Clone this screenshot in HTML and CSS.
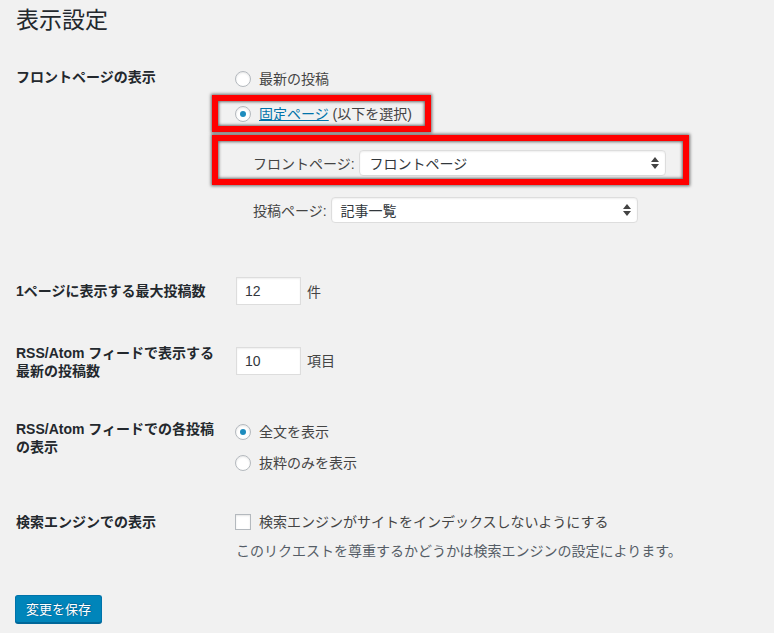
FILE: index.html
```html
<!DOCTYPE html>
<html lang="ja">
<head>
<meta charset="utf-8">
<link rel="stylesheet" href="styles.css">
</head>
<body>
<div class="wrap">
  <h1 class="title">表示設定</h1>

  <div class="row row-front">
    <div class="th">フロントページの表示</div>
    <div class="td">
      <label class="opt"><span class="radio"></span>最新の投稿</label>
      <label class="opt opt-2"><span class="radio checked"></span><a href="#" class="link">固定ページ</a>&nbsp;(以下を選択)</label>
      <div class="sel-row sel-row-1">
        <span class="sel-label">フロントページ:</span>
        <div class="select sel-front"><span>フロントページ</span>
          <svg class="arrows" width="8" height="12" viewBox="0 0 8 12"><path d="M4 0 L8 5 L0 5 Z M0 7 L8 7 L4 12 Z" fill="#444"/></svg>
        </div>
      </div>
      <div class="sel-row sel-row-2">
        <span class="sel-label">投稿ページ:</span>
        <div class="select sel-posts"><span>記事一覧</span>
          <svg class="arrows" width="8" height="12" viewBox="0 0 8 12"><path d="M4 0 L8 5 L0 5 Z M0 7 L8 7 L4 12 Z" fill="#444"/></svg>
        </div>
      </div>
    </div>
  </div>

  <div class="row row-per-page">
    <div class="th th-single">1ページに表示する最大投稿数</div>
    <div class="td td-inline">
      <span class="num-input">12</span><span class="unit">件</span>
    </div>
  </div>

  <div class="row row-rss">
    <div class="th th-double">RSS/Atom フィードで表示する<br>最新の投稿数</div>
    <div class="td td-inline td-rss">
      <span class="num-input">10</span><span class="unit">項目</span>
    </div>
  </div>

  <div class="row row-rss-use">
    <div class="th th-double">RSS/Atom フィードでの各投稿<br>の表示</div>
    <div class="td td-rss-use">
      <label class="opt"><span class="radio checked"></span>全文を表示</label>
      <label class="opt opt-b"><span class="radio"></span>抜粋のみを表示</label>
    </div>
  </div>

  <div class="row row-search">
    <div class="th">検索エンジンでの表示</div>
    <div class="td">
      <label class="opt"><span class="checkbox"></span>検索エンジンがサイトをインデックスしないようにする</label>
      <p class="description">このリクエストを尊重するかどうかは検索エンジンの設定によります。</p>
    </div>
  </div>

  <button class="button-primary">変更を保存</button>

  <div class="annot annot-1"></div>
  <div class="annot annot-2"></div>
</div>
</body>
</html>
```

FILE: styles.css
```css
html, body {
  margin: 0;
  padding: 0;
  background: #f1f1f1;
}
body {
  font-family: "Liberation Sans", "Noto Sans CJK JP", sans-serif;
  font-size: 14px;
  color: #444;
  width: 774px;
  height: 633px;
  overflow: hidden;
}
.wrap {
  position: relative;
  padding-left: 16px;
}
.title {
  margin: 0;
  padding-top: 6px;
  font-size: 23px;
  line-height: 29px;
  font-weight: 400;
  color: #23282d;
}
.row {
  display: grid;
  grid-template-columns: 219px 1fr;
}
.th {
  font-weight: 700;
  color: #23282d;
  line-height: 20px;
}
.row-front { margin-top: 29px; }
.row-front .th { padding-top: 3px; }
.row-front .td { padding-top: 5px; display: flex; flex-direction: column; align-items: flex-start; }

.opt {
  display: flex;
  align-items: center;
  height: 20px;
  line-height: 20px;
  color: #444;
  white-space: nowrap;
}
.opt-2 { margin-top: 15px; }
.radio, .checkbox {
  width: 14px;
  height: 14px;
  border: 1px solid #b4b9be;
  background: #fff;
  box-shadow: inset 0 1px 2px rgba(0,0,0,.1);
  margin-right: 8px;
  flex: none;
  display: flex;
  align-items: center;
  justify-content: center;
}
.radio { border-radius: 50%; }
.radio.checked::before {
  content: "";
  width: 6px;
  height: 6px;
  border-radius: 50%;
  background: #1e8cbe;
}
.link {
  color: #0073aa;
  text-decoration: underline;
}
.sel-row {
  display: flex;
  align-items: center;
  padding-left: 18px;
}
.sel-row-1 { margin-top: 26px; }
.sel-row-2 { margin-top: 21px; }
.sel-label { color: #444; margin-right: 4px; white-space: nowrap; }
.select {
  height: 24px;
  border: 1px solid #ddd;
  border-radius: 4px;
  background: #fff;
  box-shadow: inset 0 1px 2px rgba(0,0,0,.07);
  display: flex;
  align-items: center;
  justify-content: space-between;
  padding: 0 6px 0 10px;
  color: #32373c;
  box-sizing: content-box;
}
.sel-front { width: 289px; }
.sel-posts { width: 290px; padding-left: 9px; }
.arrows { flex: none; }

.row-per-page { margin-top: 54px; }
.th-single { padding-top: 4px; }
.td-inline { display: flex; align-items: center; }
.num-input {
  box-sizing: border-box;
  width: 65px;
  height: 28px;
  border: 1px solid #ddd;
  background: #fff;
  box-shadow: inset 0 1px 2px rgba(0,0,0,.07);
  padding: 0 8px;
  line-height: 26px;
  color: #32373c;
  margin-left: 1px;
}
.unit { margin-left: 6px; color: #444; }

.row-rss { margin-top: 39px; }
.th-double { line-height: 18px; }
.td-rss { align-items: flex-start; padding-top: 3px; }
.td-rss .unit { line-height: 28px; }

.row-rss-use { margin-top: 40px; }
.td-rss-use { padding-top: 2px; }
.opt-b { margin-top: 11px; }

.row-search { margin-top: 39px; }
.checkbox { border-radius: 0; }
.description {
  margin: 9px 0 0 1px;
  line-height: 20px;
  color: #555d66;
}
.button-primary {
  display: block;
  margin: 34px 0 0 -1px;
  height: 28px;
  padding: 0 10px 1px;
  border: 1px solid #0073aa;
  border-bottom-color: #006799;
  border-radius: 3px;
  background: #0085ba;
  box-shadow: 0 1px 0 #006799;
  color: #fff;
  font-family: "Liberation Sans", "Noto Sans CJK JP", sans-serif;
  font-size: 13px;
  text-shadow: 0 -1px 1px #006799, 1px 0 1px #006799;
}

.annot {
  position: absolute;
  border: 6px solid #ff0000;
  box-shadow: 0 0 3px 1px rgba(0,0,0,.55), inset 0 0 3px 1px rgba(0,0,0,.55);
  box-sizing: border-box;
}
.annot-1 { left: 212px; top: 95px; width: 219px; height: 37px; }
.annot-2 { left: 212px; top: 135px; width: 477px; height: 50px; }
```
